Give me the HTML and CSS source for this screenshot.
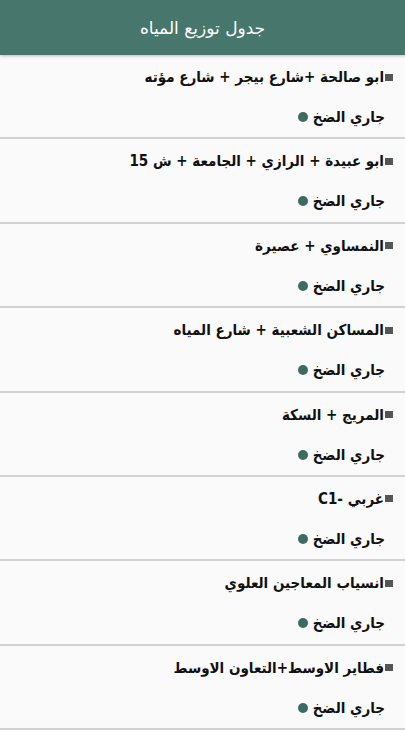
FILE: index.html
```html
<!DOCTYPE html>
<html lang="ar" dir="rtl">
<head>
    <meta charset="UTF-8">
    <title>جدول توزيع المياه</title>
    <link rel="stylesheet" href="styles.css">
</head>
<body>
    <header class="toolbar">
        <h1>جدول توزيع المياه</h1>
    </header>

    <ul class="list">
        <li class="item">
            <p class="area"><span class="mark"></span>ابو صالحة +شارع بيجر + شارع مؤته</p>
            <p class="status">جاري الضخ <span class="dot"></span></p>
        </li>
        <li class="item">
            <p class="area"><span class="mark"></span>ابو عبيدة + الرازي + الجامعة + ش 15</p>
            <p class="status">جاري الضخ <span class="dot"></span></p>
        </li>
        <li class="item">
            <p class="area"><span class="mark"></span>النمساوي + عصيرة</p>
            <p class="status">جاري الضخ <span class="dot"></span></p>
        </li>
        <li class="item">
            <p class="area"><span class="mark"></span>المساكن الشعبية + شارع المياه</p>
            <p class="status">جاري الضخ <span class="dot"></span></p>
        </li>
        <li class="item">
            <p class="area"><span class="mark"></span>المريج + السكة</p>
            <p class="status">جاري الضخ <span class="dot"></span></p>
        </li>
        <li class="item">
            <p class="area"><span class="mark"></span>غربي -C1</p>
            <p class="status">جاري الضخ <span class="dot"></span></p>
        </li>
        <li class="item">
            <p class="area"><span class="mark"></span>انسياب المعاجين العلوي</p>
            <p class="status">جاري الضخ <span class="dot"></span></p>
        </li>
        <li class="item">
            <p class="area"><span class="mark"></span>فطاير الاوسط+التعاون الاوسط</p>
            <p class="status">جاري الضخ <span class="dot"></span></p>
        </li>
    </ul>
</body>
</html>
```

FILE: styles.css
```css
body {
    margin: 0;
    font-family: "DejaVu Sans Condensed", "DejaVu Sans", sans-serif;
    background-color: #fafafa;
    color: #111;
}
.toolbar {
    height: 55px;
    background-color: #47766d;
    display: flex;
    align-items: center;
    justify-content: center;
    box-shadow: 0 1px 3px rgba(0, 0, 0, 0.25);
}
.toolbar h1 {
    margin: 0;
    font-family: "DejaVu Sans", sans-serif;
    font-size: 17px;
    font-weight: normal;
    color: #fff;
}
.list {
    list-style: none;
    margin: 0;
    padding: 0;
}
.item {
    height: 82.4px;
    border-bottom: 2px solid #d2d2d2;
    padding: 0 12px;
    display: flex;
    flex-direction: column;
}
.area {
    margin: 11px 0 0;
    font-size: 15px;
    font-weight: bold;
    line-height: 22px;
    display: flex;
    align-items: center;
}
.mark {
    width: 8px;
    height: 7px;
    background-color: #555;
    margin-left: 1px;
    flex-shrink: 0;
}
.status {
    margin: 18px 0 0;
    padding-right: 8px;
    font-size: 15px;
    font-weight: bold;
    line-height: 22px;
    display: flex;
    align-items: center;
}
.dot {
    width: 10px;
    height: 10px;
    border-radius: 50%;
    background-color: #3d6b62;
    margin-right: 5px;
}
```
